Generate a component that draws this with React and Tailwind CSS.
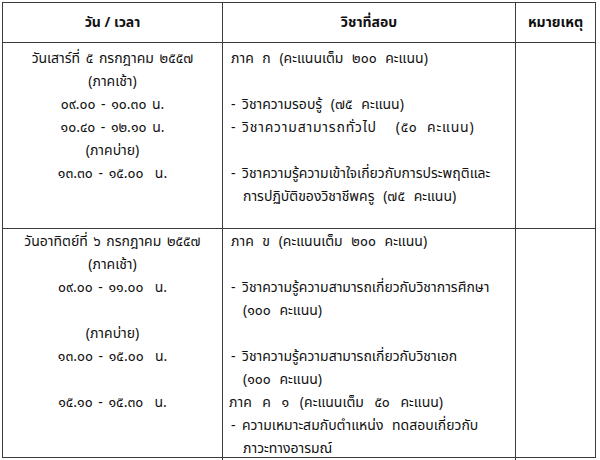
import React from "react";

const font = {
  fontFamily: '"Noto Sans Thai", "Noto Sans Thai Looped", "Noto Sans", "DejaVu Sans", Tahoma, sans-serif',
};

function Line({ children, className = "" }) {
  return <div className={"h-[23px] leading-[23px] whitespace-pre " + className}>{children}</div>;
}

function Bullet({ children, className = "" }) {
  return (
    <div className="flex h-[23px] leading-[23px] whitespace-pre">
      <span className="w-[11px] shrink-0">-</span>
      <span className={className}>{children}</span>
    </div>
  );
}

function Indent({ children }) {
  return <div className="h-[23px] leading-[23px] whitespace-pre pl-[12px]">{children}</div>;
}

export default function App() {
  return (
    <div className="w-[600px] h-[460px] bg-white pt-[2px] pl-[2px]" style={font}>
      <div className="w-[594px] border border-[#3c3c3c] text-[14px] text-[#111] box-border">
        <div className="grid grid-cols-[220px_293px_79px] h-[40px] border-b border-[#3c3c3c]">
          <div className="border-r border-[#3c3c3c] flex items-center justify-center font-bold">วัน / เวลา</div>
          <div className="border-r border-[#3c3c3c] flex items-center justify-center font-bold">วิชาที่สอบ</div>
          <div className="flex items-center justify-center font-bold">หมายเหตุ</div>
        </div>
        <div className="grid grid-cols-[220px_293px_79px] h-[186px] border-b border-[#3c3c3c]">
          <div className="border-r border-[#3c3c3c] pt-[4px] text-center [word-spacing:2px]">
            <Line>วันเสาร์ที่ ๕ กรกฎาคม ๒๕๕๗</Line>
            <Line>(ภาคเช้า)</Line>
            <Line>๐๙.๐๐ - ๑๐.๓๐ น.</Line>
            <Line>๑๐.๔๐ - ๑๒.๑๐ น.</Line>
            <Line>(ภาคบ่าย)</Line>
            <Line>๑๓.๓๐ - ๑๕.๐๐  น.</Line>
          </div>
          <div className="border-r border-[#3c3c3c] pt-[4px] pl-[8px] [word-spacing:5px]">
            <Line>ภาค ก (คะแนนเต็ม ๒๐๐ คะแนน)</Line>
            <Line />
            <Bullet>วิชาความรอบรู้ (๗๕ คะแนน)</Bullet>
            <Bullet className="tracking-[0.8px]">วิชาความสามารถทั่วไป  (๕๐ คะแนน)</Bullet>
            <Line />
            <Bullet>วิชาความรู้ความเข้าใจเกี่ยวกับการประพฤติและ</Bullet>
            <Indent>การปฏิบัติของวิชาชีพครู (๗๕ คะแนน)</Indent>
          </div>
          <div />
        </div>
        <div className="grid grid-cols-[220px_293px_79px] h-[228px]">
          <div className="border-r border-[#3c3c3c] pt-[1px] text-center [word-spacing:2px]">
            <Line>วันอาทิตย์ที่ ๖ กรกฎาคม ๒๕๕๗</Line>
            <Line>(ภาคเช้า)</Line>
            <Line>๐๙.๐๐ - ๑๑.๐๐  น.</Line>
            <Line />
            <Line>(ภาคบ่าย)</Line>
            <Line>๑๓.๐๐ - ๑๕.๐๐  น.</Line>
            <Line />
            <Line>๑๕.๑๐ - ๑๕.๓๐  น.</Line>
          </div>
          <div className="border-r border-[#3c3c3c] pt-[1px] pl-[8px] [word-spacing:5px]">
            <Line>ภาค ข (คะแนนเต็ม ๒๐๐ คะแนน)</Line>
            <Line />
            <Bullet>วิชาความรู้ความสามารถเกี่ยวกับวิชาการศึกษา</Bullet>
            <Indent>(๑๐๐ คะแนน)</Indent>
            <Line />
            <Bullet>วิชาความรู้ความสามารถเกี่ยวกับวิชาเอก</Bullet>
            <Indent>(๑๐๐ คะแนน)</Indent>
            <Line className="-ml-[2px] [word-spacing:7px]">ภาค ค ๑ (คะแนนเต็ม ๕๐ คะแนน)</Line>
            <Bullet>ความเหมาะสมกับตำแหน่ง ทดสอบเกี่ยวกับ</Bullet>
            <Indent>ภาวะทางอารมณ์</Indent>
          </div>
          <div />
        </div>
      </div>
    </div>
  );
}
